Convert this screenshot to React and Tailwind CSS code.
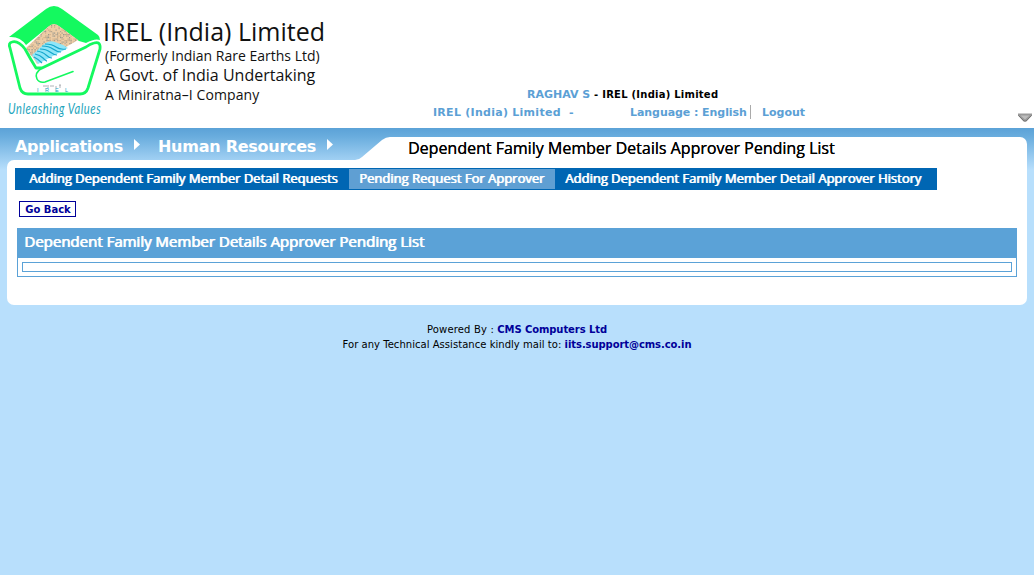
const stones = [];
for (let y = 22; y < 58; y += 1.5) {
  for (let x = 24; x < 88; x += 1.5) {
    const n = Math.floor(Math.abs(Math.sin(x * 12.9898 + y * 78.233) * 43758.5453)) % 7;
    if (n < 3) stones.push([x, y, n]);
  }
}
const stoneColors = ["#b5a58f", "#cfae88", "#9c9a90"];

function Logo() {
  return (
    <svg viewBox="0 0 104 100" className="block h-[100px] w-[104px]">
      <defs>
        <clipPath id="sand">
          <path d="M49 26 Q54 22 59 26 L78 40 L36 64 L26 49 Z" />
        </clipPath>
      </defs>
      <path d="M9 37 L46 9 Q54 3 62 9 L98 35 Q100 37 100 40 Q95 38 86 43 L79 41 L60 27 Q54 22 48 27 L26 45 Q20 36 9 37 Z" fill="#14f95f" />
      <path d="M49 26 Q54 22 59 26 L78 40 L37 64 Q33 57 26 48 Z" fill="#edcda6" />
      <g clipPath="url(#sand)">
        {stones.map(([x, y, n]) => (
          <rect key={`${x}-${y}`} x={x} y={y} width="1.2" height="1.2" fill={stoneColors[n]} />
        ))}
      </g>
      <path d="M32 55 Q39 49 44 44 Q49 40 55 42 Q62 44 68 48 L38 64 Z" fill="#8fe6f8" />
      <g fill="none" stroke="#14a6cc" strokeWidth="1.1">
        <path d="M45 44 Q52 44 56 47 T66 49" />
        <path d="M42 46 Q49 46 53 49 T61 52" />
        <path d="M40 49 Q46 49 50 52 T57 55" />
        <path d="M37 51 Q43 52 46 55 T52 58" />
        <path d="M35 54 Q40 55 43 58 T47 61" />
        <path d="M34 57 Q38 59 42 63" />
      </g>
      <g fill="none" stroke="#14f95f" strokeLinecap="round" strokeLinejoin="round">
        <path d="M86 47 L42 68 L36 68 Q31 60 25 49 Q18 40 12 42 Q8 43 10 48 L20 88 Q22 94 28 94 L80 94 Q86 94 88 88 L100 49 Q101 41 94 43 Q90 44 86 47" strokeWidth="2.8" />
        <path d="M42 68 Q34 73 37 79 Q39 83 45 82 L73 71.500" strokeWidth="1.6" />
      </g>
      <path d="M43 86h4m1 -1v3m2-2h4m2 0v2m3-3h2m-1 0v3" stroke="#9a9fa3" strokeWidth="0.8" fill="none" />
      <text x="37 45 55 65" y="92" fontFamily="Liberation Sans" fontSize="5.5" fill="#159dbb">IREL</text>
    </svg>
  );
}

function Company() {
  return (
    <div className="flex w-[325px] shrink-0">
      <div className="w-[104px] shrink-0">
        <Logo />
        <div className="ml-2 mt-[-2px] w-[130px] origin-left scale-x-[0.74] whitespace-nowrap font-['Lato',sans-serif] text-[15px] leading-[20px] tracking-[0.8px] text-[#23a5bd] italic">
          Unleashing Values
        </div>
      </div>
      <div className="ml-[-1px] whitespace-nowrap pt-[16px] font-['Open_Sans',sans-serif] text-[#111]">
        <div className="text-[25px] leading-[31px]">IREL (India) Limited</div>
        <div className="pl-[2px] text-[14px] leading-[18px]">(Formerly Indian Rare Earths Ltd)</div>
        <div className="pl-[2px] text-[16px] leading-[20px]">A Govt. of India Undertaking</div>
        <div className="pl-[2px] text-[14px] leading-[19px] tracking-[0.1px]">A Miniratna–I Company</div>
      </div>
    </div>
  );
}

function Header() {
  return (
    <header className="flex h-[128px] bg-white">
      <Company />
      <div className="flex-1 whitespace-nowrap pt-[86px] text-[11px] leading-[18px] font-bold text-[#5ba0d5]">
        <div className="pl-[202px]">
          RAGHAV S <span className="text-[10px] tracking-[0.24px] text-black">- IREL (India) Limited</span>
        </div>
        <div className="flex pl-[108px]">
          <span className="w-[197px] whitespace-pre tracking-[0.27px]">IREL (India) Limited  -</span>
          <span className="mt-[1px] h-[14px] w-[121px] border-r border-[#aaa] leading-[16px] tracking-[-0.06px]">Language : English</span>
          <span className="pl-[11px]">Logout</span>
        </div>
      </div>
      <svg viewBox="0 0 16 11" className="mt-[112px] mr-px h-[11px] w-[16px]">
        <path d="M1 1.5H15V3.5L9.5 9.5H6.500L1 3.500Z" fill="#999" />
        <path d="M3.500 3.500H12.500L8 7.500Z" fill="#bdbdbd" />
        <path d="M1.500 3.500L7 9H9L14.500 3.500" stroke="#777" fill="none" />
      </svg>
    </header>
  );
}

function MenuItem({ children }) {
  return (
    <div className="flex items-center text-[16px] font-bold text-white">
      <span>{children}</span>
      <svg viewBox="0 0 6 11" className="mb-[4px] ml-[11px] h-[11px] w-[6px]">
        <path d="M0 0L6 5.500L0 11Z" fill="#fff" />
      </svg>
    </div>
  );
}

function Nav() {
  return (
    <div className="flex h-[32px]">
      <div className="flex w-[355px] items-center gap-[18px] whitespace-nowrap pt-[5px] pl-[15px] tracking-[-0.3px]">
        <MenuItem>Applications</MenuItem>
        <MenuItem><span className="tracking-[-0.26px]">Human Resources</span></MenuItem>
      </div>
      <svg viewBox="0 0 35 23" className="mt-[9px] h-[23px] w-[35px]">
        <path d="M0 23Q4 23 7 20L27 3Q31 0 35 0V23Z" fill="#fff" />
      </svg>
      <div className="mt-[9px] mr-[7px] flex-1 rounded-tr-[7px] bg-white pl-[18px] font-['Open_Sans',sans-serif] text-[16px] leading-[23px] text-black [text-shadow:0.2px_0_0_#000]">
        Dependent Family Member Details Approver Pending List
      </div>
    </div>
  );
}

const tabs = [
  { label: "Adding Dependent Family Member Detail Requests", style: "w-[334px] pl-[14px]" },
  { label: "Pending Request For Approver", style: "w-[206px] pl-[10px] bg-[#5f9fd3]" },
  { label: "Adding Dependent Family Member Detail Approver History", style: "w-[382px] pl-[10px]" },
];

function Tabs() {
  return (
    <div className="flex h-[22px] w-[922px] bg-[#0066b3] py-px font-['Open_Sans',sans-serif] text-[13px] leading-[18px] text-white [text-shadow:0.5px_0_0_white,1px_0_0_rgba(255,255,255,0.6)]">
      {tabs.map((t) => (
        <div key={t.label} className={`whitespace-nowrap ${t.style}`}>{t.label}</div>
      ))}
    </div>
  );
}

export default function App() {
  return (
    <div className="min-h-screen bg-[#b8dffc] font-['Verdana','DejaVu_Sans',sans-serif]">
      <Header />
      <div className="bg-[linear-gradient(to_bottom,#5ba2d7_0px,#6aadde_9px,#b8dffc_42px)]">
        <Nav />
        <main className="mx-[7px] h-[145px] rounded-tl-[7px] rounded-b-[7px] bg-white px-[8px] pt-[8px]">
          <Tabs />
          <button className="mt-[11px] ml-[4px] block h-[16px] w-[57px] border border-[#000099] pl-px text-[10px] leading-[15px] font-bold whitespace-nowrap text-[#000099]">
            Go Back
          </button>
          <section className="mt-[11px] mr-[2px] ml-[2px] h-[49px] border border-[#5ba2d7]">
            <h1 className="h-[29px] bg-[#5ba2d7] pl-[6px] font-['Open_Sans',sans-serif] text-[15px] leading-[25px] text-white [text-shadow:0.5px_0_0_white,1px_0_0_rgba(255,255,255,0.7)]">
              Dependent Family Member Details Approver Pending List
            </h1>
            <div className="mx-[4px] mt-[4px] h-[10px] border border-[#5ba2d7]" />
          </section>
        </main>
      </div>
      <footer className="pt-[17px] text-center text-[10px] leading-[15px] text-black">
        <div><span className="tracking-[0.16px]">Powered By : </span><b className="tracking-[-0.08px] text-[#000099]">CMS Computers Ltd</b></div>
        <div><span className="tracking-[0.04px]">For any Technical Assistance kindly mail to: </span><b className="tracking-[-0.08px] text-[#000099]">iits.support@cms.co.in</b></div>
      </footer>
    </div>
  );
}
